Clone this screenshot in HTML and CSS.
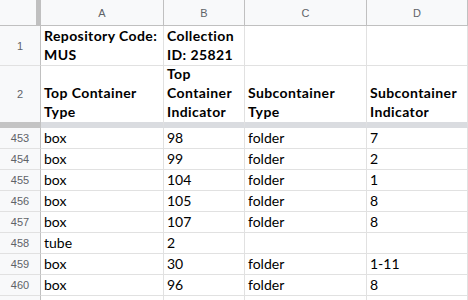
FILE: index.html
```html
<!DOCTYPE html>
<html lang="en">
<head>
    <meta charset="UTF-8">
    <title>Containers</title>
    <link rel="stylesheet" href="styles.css">
</head>
<body>
    <div class="sheet head">
        <!-- En-tete des colonnes -->
        <div class="corner"></div>
        <div class="col-head">A</div>
        <div class="col-head">B</div>
        <div class="col-head">C</div>
        <div class="col-head">D</div>

        <!-- Lignes figees -->
        <div class="row-num">1</div>
        <div class="cell bold">Repository Code: MUS</div>
        <div class="cell bold">Collection ID: 25821</div>
        <div class="cell"></div>
        <div class="cell"></div>

        <div class="row-num frozen">2</div>
        <div class="cell frozen bold">Top Container Type</div>
        <div class="cell frozen bold">Top Container Indicator</div>
        <div class="cell frozen bold">Subcontainer Type</div>
        <div class="cell frozen bold">Subcontainer Indicator</div>
    </div>
    <div class="sheet" id="rows"></div>

    <script>
        const rows = [
            [453, 'box', '98', 'folder', '7'],
            [454, 'box', '99', 'folder', '2'],
            [455, 'box', '104', 'folder', '1'],
            [456, 'box', '105', 'folder', '8'],
            [457, 'box', '107', 'folder', '8'],
            [458, 'tube', '2', '', ''],
            [459, 'box', '30', 'folder', '1-11'],
            [460, 'box', '96', 'folder', '8'],
            ['', '', '', '', '']
        ];

        const body = document.getElementById('rows');
        rows.forEach(r => {
            body.innerHTML += `
                <div class="row-num">${r[0]}</div>
                <div class="cell">${r[1]}</div>
                <div class="cell">${r[2]}</div>
                <div class="cell">${r[3]}</div>
                <div class="cell">${r[4]}</div>
            `;
        });
    </script>
</body>
</html>
```

FILE: styles.css
```css
body {
    margin: 0;
    padding: 0;
    background: white;
    height: 300px;
    overflow: hidden;
}

.sheet {
    display: grid;
    grid-template-columns: 41px 123px 81px 122px 101px;
    grid-auto-rows: 21px;
    font-family: Lato, "Liberation Sans", sans-serif;
    font-size: 14px;
    color: #000;
}

.sheet.head {
    grid-template-rows: 26px 40px 62px;
}

.corner {
    background: #f8f9fa;
    border-right: 5px solid #c0c0c0;
    border-bottom: 1px solid #c0c0c0;
    box-sizing: border-box;
}

.col-head {
    box-sizing: border-box;
    background: #f8f9fa;
    border-right: 1px solid #c0c0c0;
    border-bottom: 1px solid #c0c0c0;
    color: #5f6368;
    font-family: "Liberation Sans", Arial, sans-serif;
    font-size: 11px;
    display: flex;
    align-items: center;
    justify-content: center;
}

.row-num {
    box-sizing: border-box;
    background: #f8f9fa;
    border-right: 1px solid #c0c0c0;
    border-bottom: 1px solid #e1e1e1;
    color: #5f6368;
    font-family: "Liberation Sans", Arial, sans-serif;
    font-size: 11px;
    display: flex;
    align-items: center;
    justify-content: center;
}

.cell {
    box-sizing: border-box;
    border-right: 1px solid #e1e1e1;
    border-bottom: 1px solid #e1e1e1;
    padding: 0 3px 1px 3px;
    line-height: 19px;
    display: flex;
    align-items: flex-end;
    overflow: hidden;
}

.bold {
    font-weight: bold;
    letter-spacing: 0.4px;
}

.frozen {
    border-bottom: 6px solid #dadce0;
}

.row-num.frozen {
    border-bottom-color: #c4c4c4;
}
```
